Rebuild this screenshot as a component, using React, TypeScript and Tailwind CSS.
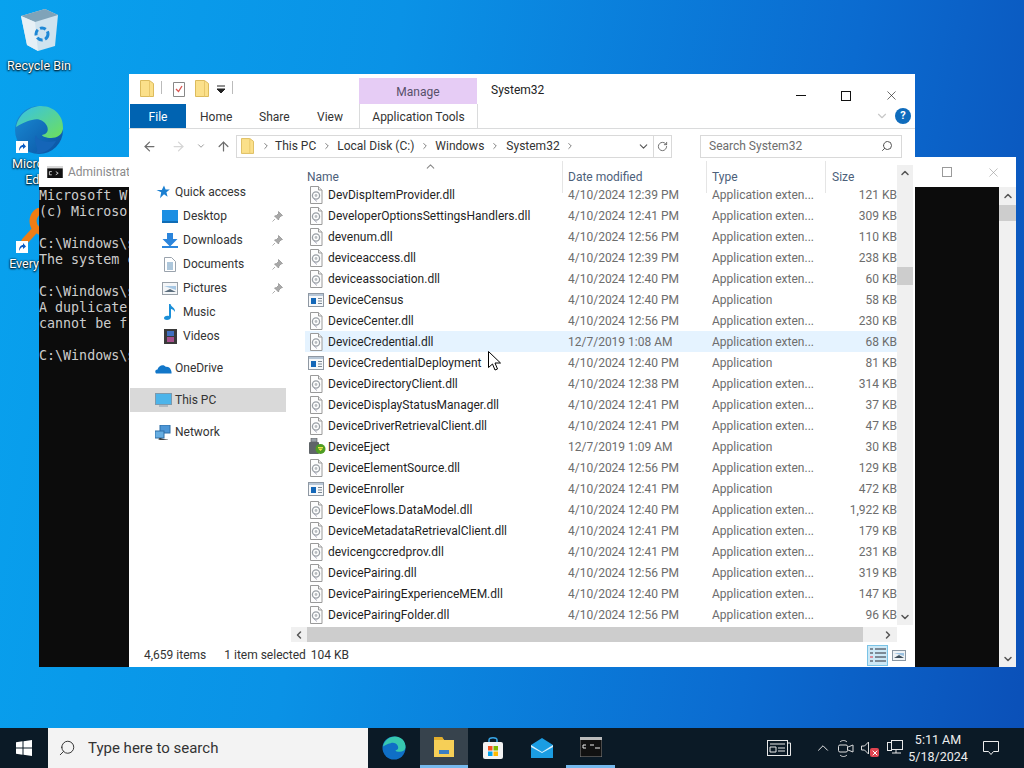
import { ArrowLeft, ArrowRight, ArrowUp, ChevronDown, ChevronRight, ChevronLeft, ChevronUp, RotateCw, Search, X } from 'lucide-react'

const FONT = "font-['Roboto','Noto_Sans',sans-serif]"

type Row = { name: string; date: string; app?: boolean; size: string; kind?: 'exe' | 'eject'; hover?: boolean }

const ROWS: Row[] = [
  { name: 'DevDispItemProvider.dll', date: '4/10/2024 12:39 PM', size: '121 KB' },
  { name: 'DeveloperOptionsSettingsHandlers.dll', date: '4/10/2024 12:41 PM', size: '309 KB' },
  { name: 'devenum.dll', date: '4/10/2024 12:56 PM', size: '110 KB' },
  { name: 'deviceaccess.dll', date: '4/10/2024 12:39 PM', size: '238 KB' },
  { name: 'deviceassociation.dll', date: '4/10/2024 12:40 PM', size: '60 KB' },
  { name: 'DeviceCensus', date: '4/10/2024 12:40 PM', app: true, size: '58 KB', kind: 'exe' },
  { name: 'DeviceCenter.dll', date: '4/10/2024 12:56 PM', size: '230 KB' },
  { name: 'DeviceCredential.dll', date: '12/7/2019 1:08 AM', size: '68 KB', hover: true },
  { name: 'DeviceCredentialDeployment', date: '4/10/2024 12:40 PM', app: true, size: '81 KB', kind: 'exe' },
  { name: 'DeviceDirectoryClient.dll', date: '4/10/2024 12:38 PM', size: '314 KB' },
  { name: 'DeviceDisplayStatusManager.dll', date: '4/10/2024 12:41 PM', size: '37 KB' },
  { name: 'DeviceDriverRetrievalClient.dll', date: '4/10/2024 12:41 PM', size: '47 KB' },
  { name: 'DeviceEject', date: '12/7/2019 1:09 AM', app: true, size: '30 KB', kind: 'eject' },
  { name: 'DeviceElementSource.dll', date: '4/10/2024 12:56 PM', size: '129 KB' },
  { name: 'DeviceEnroller', date: '4/10/2024 12:41 PM', app: true, size: '472 KB', kind: 'exe' },
  { name: 'DeviceFlows.DataModel.dll', date: '4/10/2024 12:40 PM', size: '1,922 KB' },
  { name: 'DeviceMetadataRetrievalClient.dll', date: '4/10/2024 12:41 PM', size: '179 KB' },
  { name: 'devicengccredprov.dll', date: '4/10/2024 12:41 PM', size: '231 KB' },
  { name: 'DevicePairing.dll', date: '4/10/2024 12:56 PM', size: '319 KB' },
  { name: 'DevicePairingExperienceMEM.dll', date: '4/10/2024 12:40 PM', size: '147 KB' },
  { name: 'DevicePairingFolder.dll', date: '4/10/2024 12:56 PM', size: '96 KB' },
]

// only the part of the console that shows left of the explorer window
const CMD_LINES = [
  'Microsoft W',
  '(c) Microso',
  '',
  'C:\\Windows\\s',
  'The system c',
  '',
  'C:\\Windows\\s',
  'A duplicate',
  'cannot be f',
  '',
  'C:\\Windows\\s',
]

function DllIcon() {
  return (
    <svg width="16" height="18" viewBox="0 0 16 18" className="shrink-0">
      <path d="M2.5 .5h8l3.5 3.5v13.5h-11.5z" fill="#fdfdfd" stroke="#9a9a9a" />
      <path d="M10.5 .5v3.5h3.5" fill="#eee" stroke="#9a9a9a" />
      <circle cx="8" cy="9.5" r="3.6" fill="none" stroke="#9aa0a6" strokeWidth="1.3" />
      <circle cx="8" cy="9.5" r="1.4" fill="#b8bcc0" />
      <path d="M6 13l3 2.5" stroke="#aab" />
    </svg>
  )
}

function ExeIcon() {
  return (
    <svg width="16" height="14" viewBox="0 0 16 14" className="shrink-0">
      <rect x=".5" y=".5" width="15" height="13" fill="#f6f8fa" stroke="#8f98a3" />
      <rect x="1" y="1" width="14" height="2" fill="#b7c6d6" />
      <rect x="3" y="5" width="5" height="6" fill="#1467b8" />
      <path d="M10 5.5h4M10 8h4M10 10.5h4" stroke="#7d8893" />
    </svg>
  )
}

function EjectIcon() {
  return (
    <svg width="18" height="18" viewBox="0 0 18 18" className="shrink-0">
      <rect x="3" y="0" width="6" height="4" fill="#9aa1a8" stroke="#555" strokeWidth=".6" />
      <rect x="1" y="4" width="10" height="12" rx="1" fill="#5f6468" />
      <circle cx="12.5" cy="11" r="5" fill="#4f9d23" />
      <path d="M10 10.5l2.5 2.5 2.5-2.5z" fill="#f3e24c" />
      <path d="M10 9.5h5" stroke="#f3e24c" />
    </svg>
  )
}

function FolderIcon({ w = 14, h = 17 }: { w?: number; h?: number }) {
  return (
    <svg width={w} height={h} viewBox="0 0 14 17" className="shrink-0">
      <path d="M.5 .5h9l4 3v13h-13z" fill="#fbe08a" stroke="#dcbb5c" />
      <path d="M9.5 .5v16" stroke="#e8c76a" />
    </svg>
  )
}

function Pin() {
  return (
    <svg width="11" height="11" viewBox="0 0 11 11">
      <path d="M6.5 .5l4 4-1.5.5-2 2-.5 2-4-4 2-.5 2-2zM3 8l-2.5 2.5" fill="#a8a8a8" stroke="#8c8c8c" strokeWidth=".7" />
    </svg>
  )
}

function NavItem({ icon, label, pin, sub, active }: { icon: React.ReactNode; label: string; pin?: boolean; sub?: boolean; active?: boolean }) {
  return (
    <div className={`ml-px flex h-6 w-[156px] items-center text-[12px] text-[#333] ${active ? 'bg-[#d9d9d9]' : ''}`}>
      <span className={`flex w-[18px] justify-center ${sub ? 'ml-[31px]' : 'ml-[24px]'}`}>{icon}</span>
      <span className={sub ? 'ml-[4px]' : 'ml-[3px]'}>{label}</span>
      {pin && <span className="ml-auto mr-[3px]"><Pin /></span>}
    </div>
  )
}

function Sidebar() {
  return (
    <div className="flex w-[162px] shrink-0 flex-col pt-[19px]">
      <NavItem label="Quick access" icon={<svg width="14" height="14" viewBox="0 0 14 14"><path d="M8 .5l1.6 4h4.2l-3.4 2.700 1.200 4.500L8 9.200l-4 4 1.200-6L.5 5h5.300z" fill="#1a7fd1" /></svg>} />
      <NavItem sub pin label="Desktop" icon={<svg width="16" height="13" viewBox="0 0 16 13"><rect width="16" height="12" fill="#1c8fe3" /><rect y="11" width="16" height="2" fill="#0f6cb5" /></svg>} />
      <NavItem sub pin label="Downloads" icon={<svg width="16" height="15" viewBox="0 0 16 15"><path d="M5 0h6v6h4.500L8 13.500.5 6H5z" fill="#2b85dc" /><rect y="13" width="16" height="2" fill="#2b85dc" /></svg>} />
      <NavItem sub pin label="Documents" icon={<svg width="12" height="15" viewBox="0 0 12 15"><path d="M.5.5h7l4 4v10h-11z" fill="#fff" stroke="#9aa3ad" /><path d="M3 6h6M3 8h6M3 10h6M3 12h6" stroke="#5d8fb8" /></svg>} />
      <NavItem sub pin label="Pictures" icon={<svg width="16" height="13" viewBox="0 0 16 13"><rect x=".5" y=".5" width="15" height="12" fill="#f4f6f8" stroke="#98a0a8" /><path d="M2 4h12v4z" fill="#a8c8e4" /><path d="M2 10l6-3 6 3z" fill="#5b6d7d" /></svg>} />
      <NavItem sub label="Music" icon={<svg width="12" height="16" viewBox="0 0 12 16"><path d="M5 0h1.500c.5 3 5 3.500 4.500 8-1-2-3-3-4-3v8c0 2-2 3-4 3s-3-1-3-2 2-3 5-2z" fill="#1b8fd8" /></svg>} />
      <NavItem sub label="Videos" icon={<svg width="13" height="15" viewBox="0 0 13 15"><rect width="13" height="15" fill="#3a3a3a" /><rect x="3" y="2" width="7" height="5" fill="#3f6fc0" /><rect x="3" y="8" width="7" height="5" fill="#a64f8c" /></svg>} />
      <div className="h-2" />
      <NavItem label="OneDrive" icon={<svg width="17" height="11" viewBox="0 0 17 11"><path d="M1 10.500c-1.500-2-.5-4 1.500-4 1-4 6-6 8.500-2.500 3-1 6 3 5.500 6.500z" fill="#1277c9" /></svg>} />
      <div className="h-2" />
      <NavItem active label="This PC" icon={<svg width="17" height="15" viewBox="0 0 17 15"><rect x=".5" y=".5" width="16" height="11" fill="#4cb4ea" stroke="#7d99ac" /><rect x="4" y="12" width="9" height="2" fill="#aeb8c0" /></svg>} />
      <div className="h-2" />
      <NavItem label="Network" icon={<svg width="17" height="15" viewBox="0 0 17 15"><rect x="5" y="0" width="10" height="8" fill="#4d96d6" stroke="#2f6ea6" /><rect x="0" y="6" width="9" height="7" fill="#67aee2" stroke="#2f6ea6" /><path d="M4 13v2h9" stroke="#888" /></svg>} />
    </div>
  )
}

function FileList() {
  return (
    <div className="flex min-w-0 flex-1 flex-col">
      <div className="relative grid h-[23px] grid-cols-[257px_144px_119px_72px] pl-[14px] text-[12px] leading-[32px] text-[#4c607a]">
        <ChevronUp size={13} className="absolute left-[133px] top-[-1px] text-[#8a8a8a]" />
        <span className="pl-[2px]">Name</span>
        <span className="border-l border-[#e5e5e5] pl-[5px]">Date modified</span>
        <span className="border-l border-[#e5e5e5] pl-[5px]">Type</span>
        <span className="border-l border-[#e5e5e5] pl-[6px]">Size</span>
      </div>
      <div className="pl-[14px]">
        {ROWS.map(r => (
          <div key={r.name} className={`grid h-[21px] grid-cols-[257px_144px_119px_72px] items-center text-[12px] ${r.hover ? 'bg-[#e5f3ff]' : ''}`}>
            <div className="flex items-center text-[#1f1f1f]">
              <span className="ml-[3px] flex w-[20px] shrink-0 justify-start">
                {r.kind === 'exe' ? <ExeIcon /> : r.kind === 'eject' ? <EjectIcon /> : <DllIcon />}
              </span>
              <span className="whitespace-nowrap">{r.name}</span>
            </div>
            <span className="pl-[6px] text-[#6d6d6d]">{r.date}</span>
            <span className="pl-[6px] text-[#6d6d6d]">{r.app ? 'Application' : 'Application exten...'}</span>
            <span className="text-right text-[#6d6d6d]">{r.size}</span>
          </div>
        ))}
      </div>
      <div className="mt-[2px] flex h-[15px] items-center bg-[#f0f0f0]">
        <span className="flex w-[16px] justify-center"><ChevronLeft size={12} strokeWidth={3} className="text-[#555]" /></span>
        <span className="h-full w-[556px] bg-[#cdcdcd]" />
        <span className="ml-auto flex w-[18px] justify-center"><ChevronRight size={12} strokeWidth={3} className="text-[#555]" /></span>
      </div>
    </div>
  )
}

function VScroll() {
  return (
    <div className="mt-[4px] flex h-[460px] w-[16px] shrink-0 flex-col items-center bg-[#f0f0f0] pt-[2px]">
      <ChevronUp size={12} strokeWidth={3} className="text-[#555]" />
      <div className="mt-[88px] h-[18px] w-full bg-[#cdcdcd]" />
      <ChevronDown size={12} strokeWidth={3} className="mt-auto mb-[2px] text-[#555]" />
    </div>
  )
}

function Explorer() {
  return (
    <div className={`absolute left-[129px] top-[74px] flex h-[593px] w-[786px] flex-col bg-white ${FONT}`}>
      {/* title */}
      <div className="flex h-[30px] shrink-0 items-start">
        <div className="ml-[11px] mt-[6px]"><FolderIcon /></div>
        <span className="ml-[7px] mt-[7px] h-[13px] w-px bg-[#bbb]" />
        <svg width="14" height="15" viewBox="0 0 14 15" className="ml-[10px] mt-[8px]"><path d="M1.500.5h11v14h-11z" fill="#fff" stroke="#888" /><path d="M4 7l2.500 2.500L10 4" fill="none" stroke="#d9534f" strokeWidth="1.300" /></svg>
        <div className="ml-[9px] mt-[6px]"><FolderIcon /></div>
        <svg width="10" height="10" viewBox="0 0 10 10" className="ml-[7px] mt-[11px]"><path d="M1 1h8M1 4h8l-4 4z" stroke="#222" fill="#222" /></svg>
        <span className="ml-[6px] mt-[7px] h-[13px] w-px bg-[#bbb]" />
        <div className="ml-[126px] mt-[4px] flex h-[26px] w-[118px] items-center justify-center bg-[#e6ccf5] pt-px text-[12px] text-[#57506a]">Manage</div>
        <span className="ml-[14px] mt-[7px] text-[12px] text-[#222]">System32</span>
        <span className="ml-auto mr-[16px] mt-[14px] flex items-center">
          <span className="h-px w-[10px] bg-[#111]" />
          <span className="ml-[35px] size-[10px] border border-[#111]" />
          <X size={15} strokeWidth={1} className="ml-[33px] text-[#111]" />
        </span>
      </div>
      {/* ribbon tabs */}
      <div className="flex h-[25px] shrink-0 items-center border-b border-[#dadbdc] text-[12px] text-[#333]">
        <div className="ml-px flex h-[24px] w-[56px] items-center justify-center bg-[#0063b1] pt-px text-white">File</div>
        <span className="ml-[14px] w-[59px] pt-px">Home</span>
        <span className="w-[58px] pt-px">Share</span>
        <span className="w-[42px] pt-px">View</span>
        <div className="flex h-full w-[119px] items-center justify-center border-x border-[#dadbdc] pt-px">Application Tools</div>
        <ChevronDown size={14} className="ml-auto mr-[6px] text-[#c8c8c8]" />
        <span className="mr-[4px] flex size-[16px] items-center justify-center rounded-full bg-[#0f6cbd] text-[11px] font-bold text-white">?</span>
      </div>
      {/* address row */}
      <div className="flex h-[32px] shrink-0 items-center pt-[2px] text-[12px] text-[#333]">
        <ArrowLeft size={15} className="ml-[13px] text-[#6e6e6e]" />
        <ArrowRight size={15} className="ml-[14px] text-[#d6d6d6]" />
        <ChevronDown size={10} className="ml-[10px] text-[#888]" />
        <ArrowUp size={15} className="ml-[10px] text-[#6e6e6e]" />
        <div className="ml-[5px] flex h-[23px] w-[436px] items-center border border-[#d9d9d9]">
          <div className="ml-[4px]"><FolderIcon w={13} h={16} /></div>
          <ChevronRight size={10} className="ml-[7px] text-[#666]" />
          <span className="ml-[4px]">This PC</span>
          <ChevronRight size={10} className="ml-[6px] text-[#666]" />
          <span className="ml-[5px]">Local Disk (C:)</span>
          <ChevronRight size={10} className="ml-[6px] text-[#666]" />
          <span className="ml-[5px]">Windows</span>
          <ChevronRight size={10} className="ml-[6px] text-[#666]" />
          <span className="ml-[6px]">System32</span>
          <ChevronRight size={10} className="ml-[5px] text-[#666]" />
          <ChevronDown size={13} className="ml-auto mr-[3px] text-[#555]" />
          <span className="flex h-full w-[18px] items-center justify-center border-l border-[#d9d9d9]"><RotateCw size={11} className="text-[#666]" /></span>
        </div>
        <div className="ml-[28px] flex h-[23px] w-[202px] items-center border border-[#d9d9d9] pl-[8px] text-[#6d6d6d]">
          Search System32
          <Search size={12} className="ml-auto mr-[8px] -scale-x-100 text-[#555]" />
        </div>
      </div>
      {/* body */}
      <div className="flex min-h-0 flex-1 pr-[2px]">
        <Sidebar />
        <FileList />
        <VScroll />
      </div>
      {/* status */}
      <div className="flex h-[22px] shrink-0 items-center pb-[2px] text-[12px] text-[#333]">
        <span className="ml-[15px]">4,659 items</span>
        <span className="ml-[18px]">1 item selected</span>
        <span className="ml-[5px]">104 KB</span>
        <span className="ml-auto grid size-[21px] grid-cols-[3px_11px] content-center justify-center gap-x-[2px] gap-y-[2px] border border-[#7ac3e6] bg-[#cce8f6]">
          <span className="h-[2px] bg-[#7c8a96]" /><span className="h-[2px] bg-[#7c8a96]" />
          <span className="h-[2px] bg-[#7c8a96]" /><span className="h-[2px] bg-[#7c8a96]" />
          <span className="h-[2px] bg-[#d88a9a]" /><span className="h-[2px] bg-[#7c8a96]" />
          <span className="h-[2px] bg-[#7c8a96]" /><span className="h-[2px] bg-[#7c8a96]" />
        </span>
        <svg width="14" height="11" viewBox="0 0 14 11" className="ml-[4px] mr-[9px]"><rect x=".5" y=".5" width="13" height="10" fill="#eef2f5" stroke="#8a97a3" /><path d="M2 3h10v3z" fill="#9bc1e0" /><path d="M2 8l5-3 5 3z" fill="#3f4f5c" /></svg>
      </div>
    </div>
  )
}

function CmdIcon({ size = 16 }: { size?: number }) {
  return (
    <svg width={size} height={size * 0.8} viewBox="0 0 20 16" className="shrink-0">
      <rect width="20" height="16" fill="#111" stroke="#9a9a9a" />
      <rect width="20" height="3" fill="#d8d8d8" />
      <path d="M3 7h3M3 7v4h3M8 7v0M8 10v0M11 7l3 2-3 2" stroke="#eee" fill="none" />
    </svg>
  )
}

function CmdWindow() {
  return (
    <div className="absolute left-[39px] top-[157px] flex h-[510px] w-[977px] flex-col bg-white">
      <div className={`flex h-[30px] shrink-0 items-center text-[12px] text-[#8a8a8a] ${FONT}`}>
        <span className="ml-[8px]"><CmdIcon /></span>
        <span className="ml-[5px]">Administrat</span>
        <span className="ml-auto size-[10px] border border-[#9a9a9a]" />
        <X size={15} strokeWidth={1} className="ml-[34px] mr-[15px] text-[#9a9a9a]" />
      </div>
      <div className="flex min-h-0 flex-1">
        <div className="flex-1 bg-[#0c0c0c] pt-px font-['DejaVu_Sans_Mono',monospace] text-[13.33px] leading-[16px] whitespace-pre text-[#cccccc]">
          {CMD_LINES.map((l, i) => <div key={i} className="h-4">{l}</div>)}
        </div>
        <div className="flex w-[17px] flex-col items-center bg-[#f0f0f0] pt-[3px]">
          <ChevronUp size={12} strokeWidth={3} className="text-[#555]" />
          <div className="mt-[3px] h-4 w-full bg-[#cdcdcd]" />
          <ChevronDown size={12} strokeWidth={3} className="mt-auto mb-[2px] text-[#555]" />
        </div>
      </div>
    </div>
  )
}

function Shortcut() {
  return (
    <svg width="12" height="12" viewBox="0 0 12 12" className="absolute">
      <rect width="12" height="12" fill="#fff" />
      <path d="M3 10c0-4 2-6 4-6V2l3 3.500L7 8V6c-2 0-3 2-4 4z" fill="#0a5bc4" />
    </svg>
  )
}

function DesktopIcons() {
  const label = "text-center text-[12.5px] leading-[16px] text-white [text-shadow:0_1px_2px_#000,0_0_2px_#000]"
  return (
    <div className={FONT}>
      <div className="absolute left-0 top-[8px] flex w-[78px] flex-col items-center">
        <svg width="40" height="44" viewBox="0 0 40 44">
          <path d="M2 8L26 1l13 6-3 31-17 5-11-6z" fill="#cfe3ef" />
          <path d="M2 8l14 6 23-7-13-6z" fill="#7fa3b9" />
          <path d="M16 14l3 29-11-6-6-29z" fill="#e6f0f6" />
          <circle cx="23" cy="26" r="6" fill="none" stroke="#1e88d6" strokeWidth="3" strokeDasharray="6 2.500" />
        </svg>
        <span className={`${label} mt-[6px]`}>Recycle Bin</span>
      </div>
      <div className="absolute left-0 top-[105px] flex w-[78px] flex-col items-center">
        <div className="relative">
          <svg width="50" height="50" viewBox="0 0 50 50">
            <defs>
              <linearGradient id="e1" x1="0" y1="0" x2="1" y2="1"><stop offset="0" stopColor="#1a8fd8" /><stop offset="1" stopColor="#0a4f9f" /></linearGradient>
              <linearGradient id="e2" x1="0" y1="0" x2="1" y2="1"><stop offset="0" stopColor="#35c1ea" /><stop offset="1" stopColor="#6fe05a" /></linearGradient>
            </defs>
            <circle cx="25" cy="25" r="24" fill="url(#e1)" />
            <path d="M2 22C5 7 18 1 27 1c14 0 23 11 22 23-1 6-6 9-12 9-5 0-9-2-9-3 5-1 7-4 5-9-3-6-9-8-15-6C12 16 5 20 2 22z" fill="url(#e2)" />
            <path d="M22 30c2 6 10 8 20 6-4 8-12 13-20 12C26 44 18 36 22 30z" fill="#1565b8" />
          </svg>
          <span className="absolute bottom-[2px] left-[2px] size-3"><Shortcut /></span>
        </div>
        <span className={`${label} mt-[1px]`}>Microsoft<br />Edge</span>
      </div>
      <div className="absolute left-0 top-[208px] flex w-[76px] flex-col items-center">
        <div className="relative h-[48px] w-[48px]">
          <svg width="48" height="48" viewBox="0 0 48 48">
            <circle cx="30" cy="13" r="11" fill="none" stroke="#ef7d14" strokeWidth="7" />
            <path d="M21 22L11 33" stroke="#ef7d14" strokeWidth="7" strokeLinecap="round" />
          </svg>
          <span className="absolute left-[2px] top-[33px] size-3"><Shortcut /></span>
        </div>
        <span className={label}>Everything</span>
      </div>
    </div>
  )
}

function Cursor() {
  return (
    <svg width="14" height="21" viewBox="0 0 14 21" className="absolute left-[488px] top-[351px]">
      <path d="M.5.5v16l4-3.500 2.500 6 2.500-1-2.500-6h5.500z" fill="#fff" stroke="#000" />
    </svg>
  )
}

function Taskbar() {
  return (
    <div className={`flex h-10 shrink-0 items-center bg-[#0b1a26] text-white ${FONT}`}>
      <div className="flex w-[48px] justify-center">
        <svg width="16" height="16" viewBox="0 0 16 16"><path d="M0 2.300L6.500 1.300v6.200H0zM7.500 1.200L16 0v7.500H7.500zM0 8.500h6.500v6.200L0 13.700zM7.500 8.500H16V16l-8.500-1.200z" fill="#fff" /></svg>
      </div>
      <div className="flex h-full w-[320px] items-center bg-[#f3f3f3] text-[#333]">
        <Search size={18} strokeWidth={1.3} className="ml-[10px] -scale-x-100 text-[#333]" />
        <span className="ml-[12px] text-[15px]">Type here to search</span>
      </div>
      <div className="flex h-full w-[52px] items-center justify-center">
        <svg width="24" height="24" viewBox="0 0 50 50">
          <circle cx="25" cy="25" r="24" fill="#0f6fc6" />
          <path d="M2 22C5 7 18 1 27 1c14 0 23 11 22 23-1 6-6 9-12 9-5 0-9-2-9-3 5-1 7-4 5-9-3-6-9-8-15-6C12 16 5 20 2 22z" fill="#37c8b0" />
        </svg>
      </div>
      <div className="flex h-full w-[48px] flex-col items-center justify-center border-b-[3px] border-[#76b9ed] bg-[#37434d]">
        <svg width="22" height="20" viewBox="0 0 22 20"><path d="M1 0h8l2 3h10v17H1z" fill="#f6cf57" /><path d="M1 0h8l2 3H1z" fill="#e2ae2c" /><rect x="6" y="13" width="10" height="4" fill="#3a7fc2" /></svg>
      </div>
      <div className="flex h-full w-[49px] items-center justify-center">
        <svg width="20" height="22" viewBox="0 0 20 22"><path d="M6 6V3c0-3 8-3 8 0v3" fill="none" stroke="#37a5e6" strokeWidth="1.500" /><rect y="5" width="20" height="17" rx="2" fill="#f3f3f3" /><rect x="5" y="9" width="4.500" height="4.500" fill="#f25022" /><rect x="10.500" y="9" width="4.500" height="4.500" fill="#7fba00" /><rect x="5" y="14.500" width="4.500" height="4.500" fill="#00a4ef" /><rect x="10.500" y="14.500" width="4.500" height="4.500" fill="#ffb900" /></svg>
      </div>
      <div className="flex h-full w-[49px] items-center justify-center">
        <svg width="22" height="20" viewBox="0 0 22 20"><path d="M0 7l11-7 11 7v13H0z" fill="#1b9de2" /><path d="M0 7l11 7 11-7v2l-11 6L0 9z" fill="#d6effb" /></svg>
      </div>
      <div className="flex h-full w-[49px] flex-col items-center justify-center border-b-[3px] border-[#76b9ed]">
        <svg width="22" height="20" viewBox="0 0 22 20"><rect width="22" height="20" fill="#111" stroke="#888" /><rect width="22" height="3" fill="#bbb" /><path d="M3 8h3M3 8v3h3M8 8v0M8 11v0M10 8h4M15 11h5" stroke="#eee" /></svg>
      </div>
      <div className="ml-auto flex h-full items-center">
        <svg width="24" height="16" viewBox="0 0 24 16" className="mr-[23px]" fill="none" stroke="#e8e8e8"><rect x=".5" y=".5" width="20" height="15" /><path d="M20.500 3h3v12.500h-3M3 4h15M3 7h6v5H3zM11 8h7M11 11h7" /></svg>
        <ChevronUp size={18} strokeWidth={1.3} className="mr-[6px] text-[#e8e8e8]" />
        <svg width="16" height="18" viewBox="0 0 16 18" className="mr-[7px]" fill="none" stroke="#ddd"><rect x=".5" y="6" width="9" height="7" rx="1.500" /><path d="M10 8l5-2v7l-5-2M2 3c2-2 5-2 7 0M2 16c2 2 5 2 7 0" /></svg>
        <span className="relative mr-[10px] block h-[16px] w-[16px]">
          <svg width="12" height="14" viewBox="0 0 12 14" fill="none" stroke="#ddd" className="mt-px"><path d="M.5 5h3l4-4v12l-4-4h-3z" /></svg>
          <span className="absolute bottom-[-1px] right-[-2px] flex size-[9px] items-center justify-center rounded-[2px] bg-[#e04450]"><X size={8} strokeWidth={3} className="text-white" /></span>
        </span>
        <svg width="16" height="16" viewBox="0 0 16 16" fill="none" stroke="#e8e8e8"><rect x="4.500" y=".5" width="11" height="9" /><rect x=".5" y="2.500" width="4" height="8" /><path d="M5 13h9M9 10v3" /></svg>
        <div className="flex w-[70px] flex-col items-center text-[12.5px] leading-[17px] text-[#eee]">
          <span>5:11 AM</span>
          <span>5/18/2024</span>
        </div>
        <svg width="16" height="15" viewBox="0 0 16 15" className="ml-[10px] mr-[25px]" fill="none" stroke="#eee"><path d="M.5.5h15v10h-5l-2.500 3-2.500-3h-5z" /></svg>
      </div>
    </div>
  )
}

export default function App() {
  return (
    <div className="flex h-[768px] w-[1024px] flex-col overflow-hidden">
      <div className="relative min-h-0 flex-1 bg-[linear-gradient(100deg,#08a2ee_0%,#0a92e6_35%,#0b6bd0_75%,#0b50b8_100%)]">
        <DesktopIcons />
        <CmdWindow />
        <Explorer />
        <Cursor />
      </div>
      <Taskbar />
    </div>
  )
}
